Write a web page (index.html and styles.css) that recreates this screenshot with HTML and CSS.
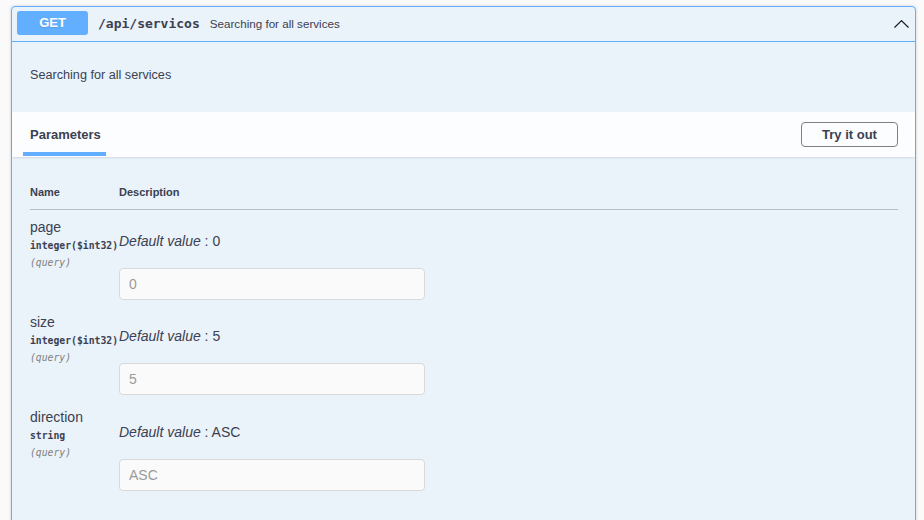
FILE: index.html
```html
<!DOCTYPE html>
<html>
<head>
<meta charset="utf-8">
<link rel="stylesheet" href="styles.css">
</head>
<body>
<div class="opblock">
  <div class="summary">
    <span class="method">GET</span>
    <span class="path">/api/servicos</span>
    <span class="summary-desc">Searching for all services</span>
    <svg class="arrow" width="17" height="17" viewBox="0 0 20 20"><path d="M 17.418 14.908 C 17.69 15.176 18.127 15.176 18.397 14.908 C 18.667 14.64 18.668 14.207 18.397 13.939 L 10.489 6.109 C 10.219 5.841 9.782 5.841 9.51 6.109 L 1.602 13.939 C 1.332 14.207 1.332 14.64 1.602 14.908 C 1.873 15.176 2.311 15.176 2.581 14.908 L 10 7.767 L 17.418 14.908 Z" fill="#1b1b1b"/></svg>
  </div>
  <div class="description">Searching for all services</div>
  <div class="section-header">
    <div class="tab">Parameters</div>
    <button class="try-out">Try it out</button>
  </div>
  <div class="params">
    <div class="params-head">
      <div class="col-name">Name</div>
      <div class="col-desc">Description</div>
    </div>
    <div class="param">
      <div class="col-name">
        <div class="p-name">page</div>
        <div class="p-type">integer<span class="p-format">($int32)</span></div>
        <div class="p-in">(query)</div>
      </div>
      <div class="col-desc">
        <div class="p-default"><i>Default value</i> : 0</div>
        <input class="p-input" type="text" placeholder="0">
      </div>
    </div>
    <div class="param">
      <div class="col-name">
        <div class="p-name">size</div>
        <div class="p-type">integer<span class="p-format">($int32)</span></div>
        <div class="p-in">(query)</div>
      </div>
      <div class="col-desc">
        <div class="p-default"><i>Default value</i> : 5</div>
        <input class="p-input" type="text" placeholder="5">
      </div>
    </div>
    <div class="param param-last">
      <div class="col-name">
        <div class="p-name">direction</div>
        <div class="p-type">string</div>
        <div class="p-in">(query)</div>
      </div>
      <div class="col-desc">
        <div class="p-default p-default-str"><i>Default value</i> : ASC</div>
        <input class="p-input" type="text" placeholder="ASC">
      </div>
    </div>
  </div>
</div>
</body>
</html>
```
FILE: styles.css
```css
html, body {
  margin: 0;
  background: #fafafa;
}
body {
  padding: 6px 8px 0 11px;
  font-family: "Liberation Sans", Arial, sans-serif;
  color: #3b4151;
  overflow: hidden;
}
.opblock {
  border: 1px solid #61affe;
  border-radius: 4px;
  background: rgba(97, 175, 254, 0.1);
  box-shadow: 0 0 3px rgba(0, 0, 0, 0.19);
  padding-bottom: 60px;
}
.summary {
  display: flex;
  align-items: center;
  height: 34px;
  padding: 0 5px;
  border-bottom: 1px solid #61affe;
}
.method {
  width: 71px;
  height: 24px;
  line-height: 24px;
  background: #61affe;
  color: #fff;
  border-radius: 3px;
  text-align: center;
  font-size: 13px;
  font-weight: 700;
  text-shadow: 0 1px 0 rgba(0, 0, 0, 0.1);
  margin-top: -2px;
}
.path {
  margin-left: 10px;
  font-family: "DejaVu Sans Mono", monospace;
  font-weight: 700;
  font-size: 13px;
  color: #3b4151;
  margin-top: -2px;
}
.summary-desc {
  margin-left: 10px;
  font-size: 11.65px;
  color: #3b4151;
  flex: 1;
  margin-top: -2px;
}
.arrow {
  margin-top: -2px;
}
.description {
  padding: 25px 18px 29px;
  font-size: 12.65px;
  line-height: 16px;
}
.section-header {
  display: flex;
  justify-content: space-between;
  height: 45px;
  padding: 0 17px 0 11px;
  background: rgba(255, 255, 255, 0.8);
  box-shadow: 0 1px 2px rgba(0, 0, 0, 0.1);
}
.tab {
  align-self: flex-start;
  padding: 15px 5px 9px 7px;
  font-size: 13px;
  line-height: 16px;
  font-weight: 700;
  border-bottom: 4px solid #61affe;
  height: 16px;
}
.try-out {
  align-self: center;
  width: 97px;
  height: 25px;
  padding: 0;
  border: 1px solid #808080;
  border-radius: 4px;
  background: transparent;
  font-family: "Liberation Sans", Arial, sans-serif;
  font-size: 13px;
  font-weight: 700;
  color: #3b4151;
}
.params {
  padding: 28px 17px 0 18px;
}
.params-head {
  display: grid;
  grid-template-columns: 89px 1fr;
  font-size: 11px;
  font-weight: 700;
  line-height: 14px;
  padding-bottom: 10px;
  border-bottom: 1px solid rgba(59, 65, 81, 0.3);
  margin-bottom: 8px;
}
.param {
  display: grid;
  grid-template-columns: 89px 1fr;
  padding-bottom: 13px;
}
.p-name {
  font-size: 14px;
  line-height: 18px;
}
.p-type {
  font-family: "DejaVu Sans Mono", monospace;
  font-weight: 700;
  font-size: 9.75px;
  line-height: 20px;
  white-space: nowrap;
}
.p-in {
  font-family: "DejaVu Sans Mono", monospace;
  font-style: italic;
  font-size: 9.75px;
  line-height: 14px;
  color: #808080;
}
.p-default {
  margin-top: 14px;
  font-size: 14px;
  line-height: 18px;
}
.p-default-str {
  margin-top: 15px;
}
.p-input {
  display: block;
  box-sizing: border-box;
  margin: 18px 0 0;
  width: 306px;
  height: 32px;
  padding: 0 9px;
  border: 1px solid #d9d9d9;
  border-radius: 4px;
  background: #fafafa;
  font-family: "Liberation Sans", Arial, sans-serif;
  font-size: 14px;
  color: #3b4151;
  outline: none;
}
.p-input::placeholder {
  color: #9a9a9a;
}
```
